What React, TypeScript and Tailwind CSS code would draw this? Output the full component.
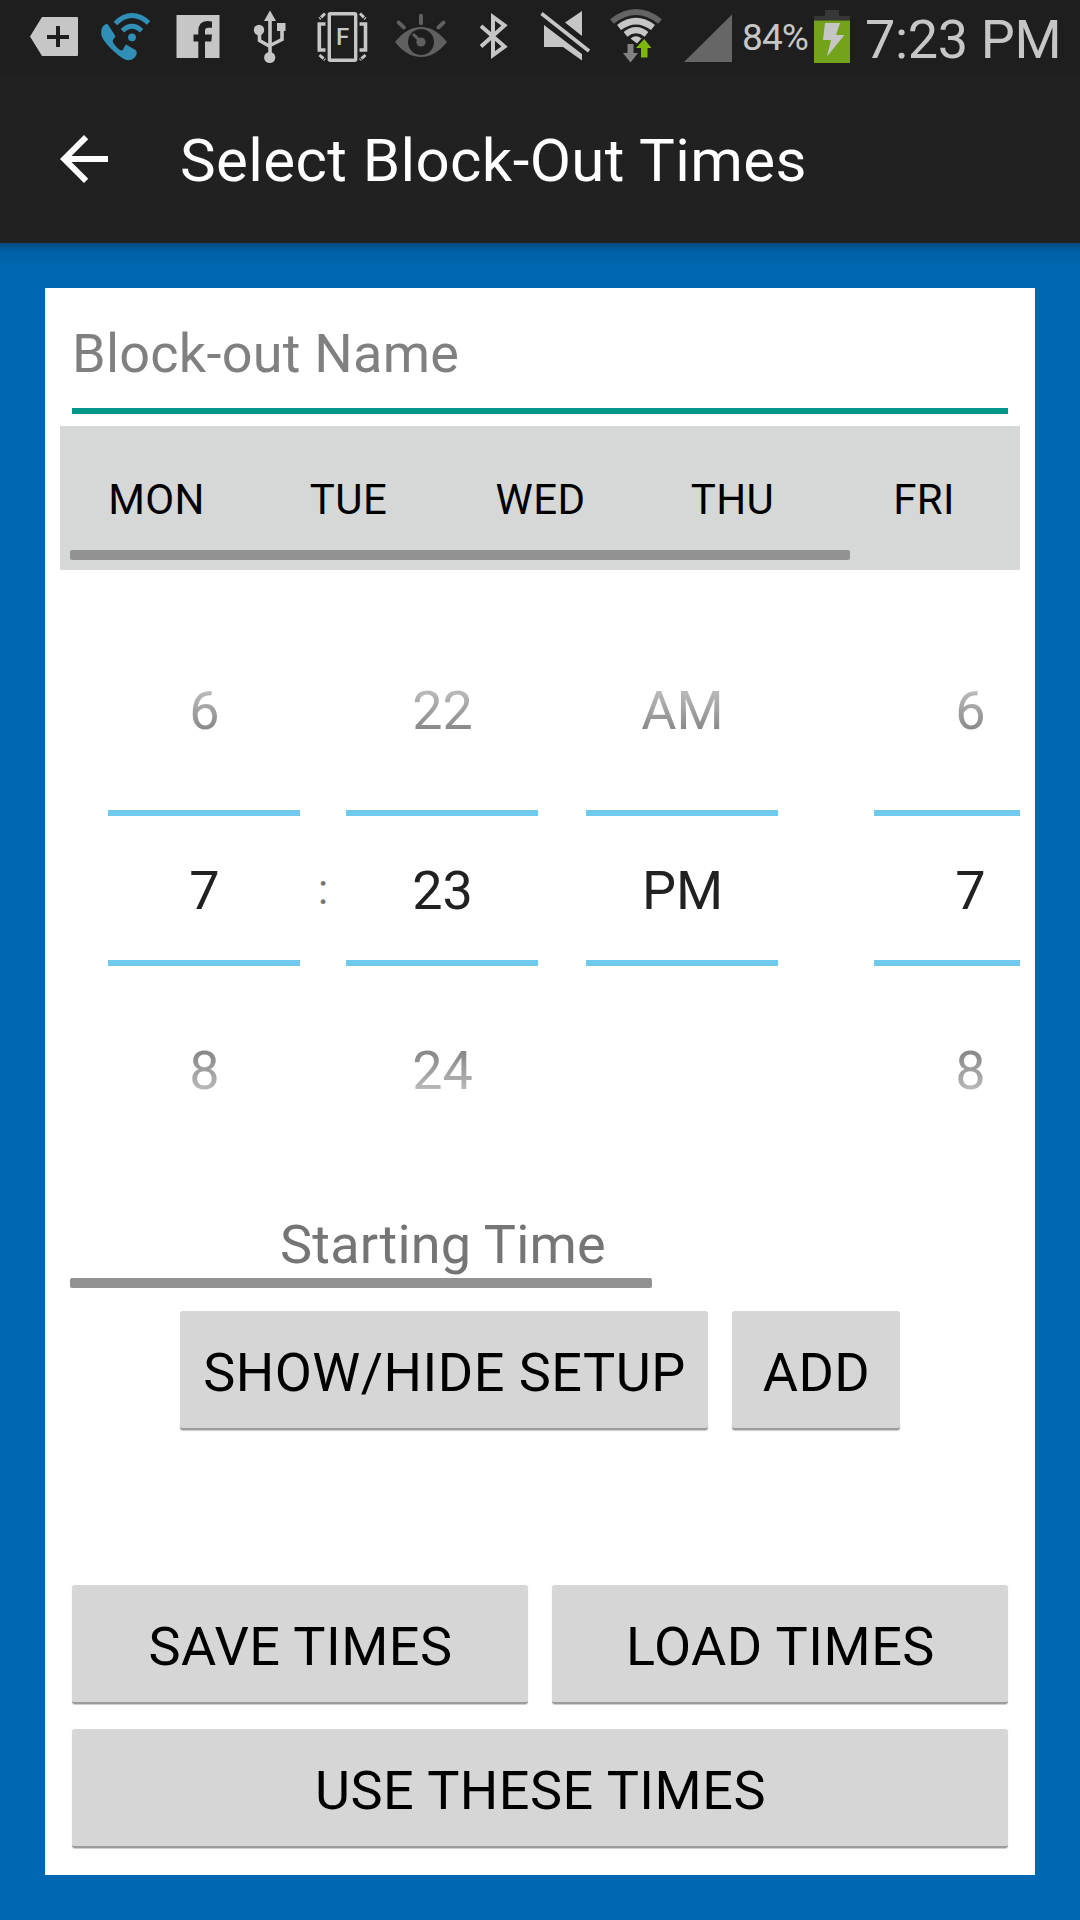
import React from "react";

const LIGHT = "#c6c6c6";

function StatusIcon({ x, w, children }: { x: number; w: number; children: React.ReactNode }) {
  return (
    <svg width={w} height={75} viewBox={`${x} 0 ${w} 75`} className="block shrink-0">
      {children}
    </svg>
  );
}

function StatusBar() {
  return (
    <div className="flex h-[75px] w-full bg-[#1e1e1e] text-[#c6c6c6]">
      <StatusIcon x={0} w={90}>
        <path
          fillRule="evenodd"
          fill={LIGHT}
          d="M42 17H77q1 0 1 1V55q0 1-1 1H42L30 36.5ZM56 26v9H47v4h9v8h4v-8h9v-4h-9v-9Z"
        />
      </StatusIcon>
      <StatusIcon x={90} w={75}>
        <g fill="none" stroke="#2f8fb7" strokeWidth="5">
          <path d="M115.500 23.500Q123 15.500 132 15.500T148.500 23" />
          <path d="M122.500 30.800Q127 26.300 132 26.300T141.500 30.800" />
        </g>
        <circle cx="132" cy="37.300" r="3.900" fill="#2f8fb7" />
        <path
          fill="#2f8fb7"
          d="M108 24.500L115 35.500Q116 37 114 38.500Q112 40 113 42.500Q117 48.500 121 50.500Q123 51 124 47.500L126 44.500L135.500 50Q137.500 51.500 136.300 55Q134 60 128.500 60.300Q123 60 114 51.500Q103.500 42 101.300 35Q100 27 106 24Q107.500 23.700 108 24.500Z"
        />
      </StatusIcon>
      <StatusIcon x={165} w={80}>
        <path
          fill={LIGHT}
          d="M176.500 15H219.500V58H205V41.500H211.300L212 34.500H205V31Q205 27.800 208 27.800H212V21.500Q198.500 18.500 198.300 31V34.500H193.500V41.500H198.300V58H176.500Z"
        />
      </StatusIcon>
      <StatusIcon x={245} w={60}>
        <g fill={LIGHT}>
          <path d="M270 10.500L276 21H264Z" />
          <circle cx="259" cy="30" r="5.200" />
          <rect x="277" y="23" width="8.500" height="8" />
          <circle cx="269.700" cy="57.500" r="5.600" />
        </g>
        <path d="M270 20V54M259.500 33V40.500L270 46.500M282 30V39.500L270 45.500" fill="none" stroke={LIGHT} strokeWidth="3.600" />
      </StatusIcon>
      <StatusIcon x={305} w={80}>
        <g fill="none" stroke={LIGHT}>
          <rect x="329.300" y="13.800" width="26.400" height="46.400" rx="1" strokeWidth="3.400" />
          <path d="M325.500 24H319.300V50H325.500M359.500 24H365.500V50H359.500" strokeWidth="3.600" />
          <path
            d="M325 13.500L319.500 18.800M360 13.500L365.500 18.800M319.500 55L325 60M365.500 55L360 60"
            strokeWidth="3"
            strokeDasharray="5.500 1 3"
          />
        </g>
        <text x="336" y="45" fontFamily="Roboto, sans-serif" fontSize="24" fontWeight="500" fill={LIGHT}>
          F
        </text>
      </StatusIcon>
      <StatusIcon x={385} w={75}>
        <path fill="#606060" d="M395 42Q407 27 421 27T447 42Q435 57 421 57T395 42Z" />
        <circle cx="421" cy="42" r="13" fill="#1e1e1e" />
        <circle cx="421" cy="42" r="4.600" fill="#606060" />
        <path d="M421 15.800V23.200M398.700 22.600L403.800 27.400M443.500 22.600L438.500 27.400" stroke="#606060" strokeWidth="4" strokeLinecap="round" />
        <path d="M413 34L419 40" stroke="#606060" strokeWidth="3" />
      </StatusIcon>
      <StatusIcon x={460} w={60}>
        <path d="M481 26L504.500 46.500L493 55V17L504.500 25.500L481 46.500" fill="none" stroke={LIGHT} strokeWidth="4" />
      </StatusIcon>
      <StatusIcon x={520} w={80}>
        <path fill={LIGHT} d="M544 25V47H563L582 60.500V54ZM582 11V36L565 22.500Z" />
        <path d="M541.500 13.500L589 51" stroke={LIGHT} strokeWidth="3.600" />
      </StatusIcon>
      <StatusIcon x={600} w={75}>
        <path d="M612 21.500Q636 2.500 660 21.500" fill="none" stroke="#646464" strokeWidth="6" />
        <path d="M619 27.500Q636 14.800 653 27.500" fill="none" stroke={LIGHT} strokeWidth="6.500" />
        <path d="M625.500 34.300Q636 26 646.500 34.300" fill="none" stroke={LIGHT} strokeWidth="6" />
        <path fill={LIGHT} d="M630.500 38.500Q636 33.800 641.500 38.500L637 43.500Z" />
        <path fill="#828282" d="M627.500 44H633.500V53H638L630.500 62.500L623 53H627.500Z" />
        <path fill="#7db70e" d="M641 57.500H647.500V48H651.500L644.200 39L636 48H641Z" />
      </StatusIcon>
      <StatusIcon x={675} w={66}>
        <path fill="#666" d="M732 14.500V62H684Z" />
      </StatusIcon>
      <span className="w-[73px] shrink-0 pt-[10px] pl-[1px] text-[37px] leading-[56px] tracking-[-0.900px] whitespace-nowrap">84%</span>
      <StatusIcon x={814} w={36}>
        <path fill="#373737" d="M825 10H839V16H850V20.500H814V16H825Z" />
        <rect x="814" y="20.500" width="36" height="42.500" fill="#72a31a" />
        <path fill={LIGHT} d="M825 23H840L836 35H844.500L827 56.500L831 40H823Z" />
      </StatusIcon>
      <span className="pt-[10px] pl-[15px] text-[54px] leading-[60px] tracking-[-0.350px] whitespace-nowrap">7:23 PM</span>
    </div>
  );
}

function Column({ items }: { items: string[] }) {
  return (
    <div className="flex w-[192px] shrink-0 flex-col text-center leading-[60px]">
      <div className="h-[240px] pt-[111px] pl-px">
        <span className="block bg-linear-to-b from-[#c0c0c0] from-10% to-[#828282] to-90% bg-clip-text text-transparent">{items[0]}</span>
      </div>
      <div className="h-[156px] border-y-[6px] border-[#6fcaee] pt-[45px] pl-px text-[#212121]">{items[1]}</div>
      <div className="h-[240px] pt-[75px] pl-px">
        <span className="block bg-linear-to-b from-[#828282] from-10% to-[#c0c0c0] to-90% bg-clip-text text-transparent">{items[2]}</span>
      </div>
    </div>
  );
}

function Button({ label, className }: { label: string; className: string }) {
  return (
    <button
      className={
        "h-[119px] shrink-0 rounded-[3px] border-b-2 border-[#9b9b9b] bg-[#d6d6d6] pt-[7px] pl-px leading-[60px] tracking-[0.500px] whitespace-nowrap text-black shadow-[0_1px_1px_rgba(0,0,0,0.2)] " +
        className
      }
    >
      {label}
    </button>
  );
}

export default function App() {
  return (
    <div className="flex h-[1920px] w-[1080px] flex-col overflow-hidden bg-[#0068b2] font-[Roboto,sans-serif]">
      <StatusBar />
      <header className="flex h-[168px] shrink-0 items-center bg-[#212121] pl-[48px]">
        <svg width="72" height="72" viewBox="0 0 24 24" fill="#fff">
          <path d="M20 11H7.830l5.590-5.590L12 4l-8 8 8 8 1.410-1.410L7.830 13H20v-2z" />
        </svg>
        <h1 className="pt-[3px] pl-[60px] text-[60px] leading-[70px] tracking-[0.410px] whitespace-nowrap text-white">Select Block-Out Times</h1>
      </header>
      <div className="h-[45px] shrink-0 bg-linear-to-b from-[#004a80] via-[#0062a8] via-20% to-[#0068b2] to-60%" />

      <main className="mx-[45px] flex h-[1587px] shrink-0 flex-col bg-white px-[15px] text-[54px]">
        <div className="mx-[12px] h-[126px] border-b-[6px] border-[#009688] pt-[36px] leading-[60px] tracking-[0.250px] text-[#808080]">Block-out Name</div>

        <section className="mt-[12px] h-[144px] bg-[#d6d8d7]">
          <div className="grid h-[124px] grid-cols-5 pt-[45px] text-center text-[42px] leading-[57px] tracking-[0.400px] text-black">
            <span className="pl-px">MON</span>
            <span className="pl-px">TUE</span>
            <span className="pl-px">WED</span>
            <span className="pl-px">THU</span>
            <span>FRI</span>
          </div>
          <div className="ml-[10px] h-[10px] w-[780px] rounded-[2px] bg-[#929292]" />
        </section>

        <section className="flex h-[636px] overflow-hidden pl-[48px]">
          <Column items={["6", "7", "8"]} />
          <span className="w-[46px] shrink-0 pt-[290px] text-center text-[42px] leading-[60px] text-[#757575]">:</span>
          <Column items={["22", "23", "24"]} />
          <div className="w-[48px] shrink-0" />
          <Column items={["AM", "PM", ""]} />
          <div className="w-[96px] shrink-0" />
          <Column items={["6", "7", "8"]} />
        </section>

        <div className="h-[72px] pt-[9px] pl-[220px] leading-[60px] tracking-[0.200px] text-[#757575]">Starting Time</div>
        <div className="ml-[10px] h-[10px] w-[582px] shrink-0 rounded-[2px] bg-[#929292]" />

        <div className="mt-[23px] flex justify-center gap-[24px]">
          <Button label="SHOW/HIDE SETUP" className="w-[528px]" />
          <Button label="ADD" className="w-[168px]" />
        </div>
        <div className="mt-[155px] flex justify-center gap-[24px]">
          <Button label="SAVE TIMES" className="w-[456px]" />
          <Button label="LOAD TIMES" className="w-[456px]" />
        </div>
        <div className="mt-[25px] flex justify-center">
          <Button label="USE THESE TIMES" className="w-[936px]" />
        </div>
      </main>
    </div>
  );
}
